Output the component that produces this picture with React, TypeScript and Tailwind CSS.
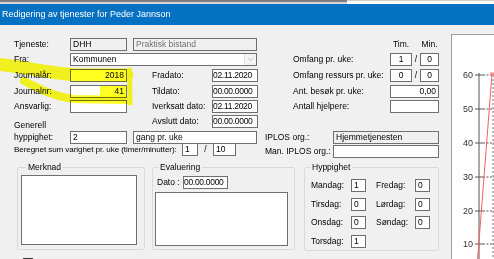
import React from 'react';
import { ChevronDown } from 'lucide-react';

type FieldProps = {
  w: string;
  children?: React.ReactNode;
  align?: 'left' | 'right' | 'center';
  gray?: boolean;
  muted?: boolean;
  tight?: boolean;
  className?: string;
};

function Field({ w, children, align = 'left', gray, muted, tight, className = '' }: FieldProps) {
  const alignCls = align === 'right' ? 'text-right' : align === 'center' ? 'text-center' : 'text-left';
  return (
    <div
      className={`${w} h-[13px] shrink-0 border border-[#6f6f6f] leading-[11px] whitespace-nowrap overflow-hidden ${
        tight ? 'px-0 tracking-[-0.3px]' : 'px-[2px]'
      } ${gray ? 'bg-[#f0f0f0]' : 'bg-white'} ${muted ? 'text-[#707070]' : 'text-black'} ${alignCls} ${className}`}
    >
      {children}
    </div>
  );
}

function Label({ w, children, className = '' }: { w: string; children: React.ReactNode; className?: string }) {
  return <div className={`${w} shrink-0 leading-[13px] whitespace-nowrap ${className}`}>{children}</div>;
}

function TimMin({ label, tim, min }: { label: string; tim: string; min: string }) {
  return (
    <div className="flex pl-[28px]">
      <Label w="w-[97px]">{label}</Label>
      <Field w="w-[22px]" align="center">{tim}</Field>
      <div className="w-[8px] text-center leading-[13px]">/</div>
      <Field w="w-[19px]" align="center">{min}</Field>
    </div>
  );
}

function DayRow({ a, av, b, bv }: { a: string; av: string; b?: string; bv?: string }) {
  return (
    <div className="flex">
      <Label w="w-[40px]">{a}</Label>
      <Field w="w-[15px]">{av}</Field>
      {b && (
        <>
          <Label w="w-[39px]" className="ml-[10px]">{b}</Label>
          <Field w="w-[15px]">{bv}</Field>
        </>
      )}
    </div>
  );
}

function Chart() {
  const ticks = [
    { v: '60', y: 40 },
    { v: '50', y: 74 },
    { v: '40', y: 108 },
    { v: '30', y: 142 },
    { v: '20', y: 176 },
    { v: '10', y: 209 },
  ];
  return (
    <svg width="42" height="230" viewBox="0 0 42 230">
      <line x1="27" y1="38" x2="27" y2="230" stroke="#555" strokeWidth="1" />
      <line x1="41" y1="40" x2="41" y2="230" stroke="#777" strokeWidth="1" strokeDasharray="2 2" />
      {ticks.map((t) => (
        <g key={t.v}>
          <text x="21" y={t.y + 3} textAnchor="end" fontSize="9" fill="#333" fontFamily="Liberation Sans, sans-serif">
            {t.v}
          </text>
          <line x1="23" y1={t.y} x2="31" y2={t.y} stroke="#555" strokeWidth="1" />
          <line x1="31" y1={t.y} x2="42" y2={t.y} stroke="#555" strokeWidth="1" strokeDasharray="2 1.5" />
        </g>
      ))}
      <line x1="25" y1="232" x2="40" y2="39" stroke="#ff5c5c" strokeWidth="1" />
      <line x1="40" y1="39" x2="42" y2="39" stroke="#ff5c5c" strokeWidth="1" />
      <rect x="38.5" y="37.5" width="3" height="3" fill="#ff8080" />
    </svg>
  );
}

export default function App() {
  return (
    <div className="relative w-[494px] h-[259px] overflow-hidden bg-[#f0f0f0] text-[8.5px] text-black font-['Liberation_Sans',Arial,sans-serif]">
      {/* window edge / title */}
      <div className="flex h-[4px]">
        <div className="w-[347px] border-t-[2px] border-[#7e7e7e] bg-[#d6d6d6]" />
        <div className="flex-1 border-t border-[#cfcfcf] bg-white" />
      </div>
      <div className="h-[21px] bg-[#0571c3] pl-[2px] text-[9px] leading-[20px] text-white">
        Redigering av tjenester for Peder Jannson
      </div>

      <div className="flex">
        <div className="w-[451px] shrink-0 pt-[13px]">
          {/* Tjeneste */}
          <div className="flex h-[15px]">
            <div className="flex w-[265px] shrink-0">
              <Label w="w-[70px]" className="pl-[14px]">Tjeneste:</Label>
              <Field w="w-[57px]" gray>DHH</Field>
              <Field w="w-[124px]" gray muted className="ml-[6px]">Praktisk bistand</Field>
            </div>
            <div className="flex pl-[125px] leading-[13px]">
              <div className="w-[22px] text-center">Tim.</div>
              <div className="w-[8px]" />
              <div className="w-[19px] text-center">Min.</div>
            </div>
          </div>

          {/* Fra */}
          <div className="flex h-[16px]">
            <div className="flex w-[265px] shrink-0">
              <Label w="w-[70px]" className="pl-[14px]">Fra:</Label>
              <div className="flex w-[187px] h-[13px] border border-[#6f6f6f] bg-white">
                <div className="flex-1 px-[2px] leading-[11px]">Kommunen</div>
                <div className="flex w-[12px] items-center justify-center border-l border-[#e2e2e2] bg-[#f4f4f4]">
                  <ChevronDown size={9} color="#9a9a9a" strokeWidth={1.5} />
                </div>
              </div>
            </div>
            <TimMin label="Omfang pr. uke:" tim="1" min="0" />
          </div>

          {/* Journalår */}
          <div className="flex h-[16px]">
            <div className="flex w-[265px] shrink-0">
              <Label w="w-[70px]" className="pl-[14px]">Journalår:</Label>
              <Field w="w-[57px]" align="right">2018</Field>
              <Label w="w-[60px]" className="ml-[25px]">Fradato:</Label>
              <Field w="w-[46px]" tight>02.11.2020</Field>
            </div>
            <TimMin label="Omfang ressurs pr. uke:" tim="0" min="0" />
          </div>

          {/* Journalnr */}
          <div className="flex h-[15px]">
            <div className="flex w-[265px] shrink-0">
              <Label w="w-[70px]" className="pl-[14px]">Journalnr:</Label>
              <Field w="w-[57px]" align="right">41</Field>
              <Label w="w-[60px]" className="ml-[25px]">Tildato:</Label>
              <Field w="w-[46px]" tight>00.00.0000</Field>
            </div>
            <div className="flex pl-[28px]">
              <Label w="w-[97px]">Ant. besøk pr. uke:</Label>
              <Field w="w-[49px]" align="right">0,00</Field>
            </div>
          </div>

          {/* Ansvarlig */}
          <div className="flex h-[15px]">
            <div className="flex w-[265px] shrink-0">
              <Label w="w-[70px]" className="pl-[14px]">Ansvarlig:</Label>
              <Field w="w-[57px]" />
              <Label w="w-[60px]" className="ml-[25px]">Iverksatt dato:</Label>
              <Field w="w-[46px]" tight>02.11.2020</Field>
            </div>
            <div className="flex pl-[28px]">
              <Label w="w-[97px]">Antall hjelpere:</Label>
              <Field w="w-[49px]" />
            </div>
          </div>

          {/* Avslutt */}
          <div className="flex h-[16px]">
            <Label w="w-[60px]" className="ml-[152px]">Avslutt dato:</Label>
            <Field w="w-[46px]" tight>00.00.0000</Field>
          </div>

          {/* Generell hyppighet */}
          <div className="flex h-[12px]">
            <div className="flex w-[265px] shrink-0">
              <div className="w-[70px] shrink-0 pl-[14px] -mt-[12px] leading-[12px]">
                Generell
                <br />
                hyppighet:
              </div>
              <Field w="w-[57px]">2</Field>
              <Field w="w-[124px]" className="ml-[6px]">gang pr. uke</Field>
            </div>
            <div className="flex">
              <Label w="w-[68px]">IPLOS org.:</Label>
              <Field w="w-[106px]" gray>Hjemmetjenesten</Field>
            </div>
          </div>

          {/* Beregnet */}
          <div className="flex h-[19px]">
            <div className="flex w-[265px] shrink-0">
              <Label w="w-[182px]" className="pl-[14px] text-[8.1px] tracking-[-0.1px]">
                Beregnet sum varighet pr. uke (timer/minutter):
              </Label>
              <Field w="w-[16px]">1</Field>
              <div className="w-[15px] text-center leading-[13px]">/</div>
              <Field w="w-[23px]">10</Field>
            </div>
            <div className="flex mt-[2px]">
              <Label w="w-[68px]">Man. IPLOS org.:</Label>
              <Field w="w-[106px]" />
            </div>
          </div>

          {/* group boxes */}
          <div className="flex">
            <fieldset className="ml-[17px] w-[128px] h-[88px] border border-[#d9d9d9] rounded-[2px]">
              <legend className="ml-[8px] px-[2px] leading-[10px]">Merknad</legend>
              <div className="ml-[3px] mt-[3px] w-[116px] h-[70px] border border-[#6f6f6f] bg-white" />
            </fieldset>
            <fieldset className="ml-[7px] w-[143px] h-[88px] border border-[#d9d9d9] rounded-[2px]">
              <legend className="ml-[5px] px-[2px] leading-[10px]">Evaluering</legend>
              <div className="flex mt-[4px] pl-[4px]">
                <Label w="w-[26px]">Dato :</Label>
                <Field w="w-[45px]" tight>00.00.0000</Field>
              </div>
              <div className="ml-[2px] mt-[3px] w-[133px] h-[54px] border border-[#6f6f6f] bg-white" />
            </fieldset>
            <fieldset className="ml-[9px] w-[135px] h-[89px] border border-[#d9d9d9] rounded-[2px]">
              <legend className="ml-[5px] px-[2px] leading-[10px]">Hyppighet</legend>
              <div className="mt-[7px] pl-[6px] flex flex-col gap-[5.5px]">
                <DayRow a="Mandag:" av="1" b="Fredag:" bv="0" />
                <DayRow a="Tirsdag:" av="0" b="Lørdag:" bv="0" />
                <DayRow a="Onsdag:" av="0" b="Søndag:" bv="0" />
                <DayRow a="Torsdag:" av="1" />
              </div>
            </fieldset>
          </div>

          <div className="ml-[23px] mt-[7px] w-[10px] h-[10px] border border-[#333] bg-white" />
        </div>

        {/* chart */}
        <div className="mt-[9px] flex-1 h-[240px] border-l border-t border-[#a0a0a0] bg-white">
          <Chart />
        </div>
      </div>

      {/* highlighter marks */}
      <svg className="pointer-events-none absolute inset-0 mix-blend-multiply" width="494" height="259">
        <g stroke="#ffff10" fill="none" strokeLinecap="round" strokeLinejoin="round" opacity="0.92">
          <path d="M -6 64 C 20 66, 48 73, 78 75 L 127 75" strokeWidth="13" />
          <path d="M 24 81 C 38 88, 54 97, 74 99 L 127 100" strokeWidth="8" />
          <path d="M 129.5 70 L 130 103" strokeWidth="5" />
        </g>
        <rect x="100" y="86" width="26" height="11" fill="#ffff10" opacity="0.92" />
      </svg>
    </div>
  );
}
